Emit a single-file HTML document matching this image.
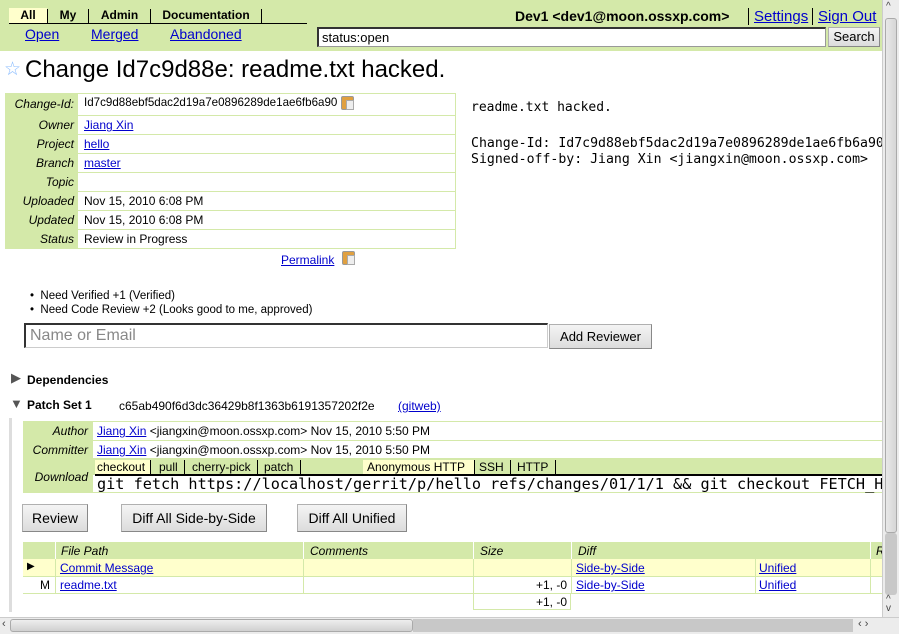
<!DOCTYPE html>
<html><head><meta charset="utf-8"><style>
*{margin:0;padding:0;box-sizing:border-box}
body{width:899px;height:634px;overflow:hidden;background:#fff;font-family:"Liberation Sans",sans-serif;font-size:12px;color:#000;position:relative}
.a{position:absolute;white-space:nowrap}
a,.l{color:#00c;text-decoration:underline}
.g{background:#d4e9a9}
.y{background:#ffffcc}
.m{font-family:"DejaVu Sans Mono","Liberation Mono",monospace}
.btn{position:absolute;background:linear-gradient(#f4f4f4,#dcdcdc);border:1px solid #b0b0b0;border-right-color:#888;border-bottom-color:#888;font-size:14px;text-align:center;line-height:26px}
.lab{position:absolute;font-style:italic;text-align:right}
.hl{position:absolute;height:1px;background:#d4e9a9}
.copy{position:absolute;width:13px;height:14px;background:#e0a040;border:1px solid #999;border-radius:2px}
.copy:after{content:"";position:absolute;left:4px;top:3px;width:6px;height:8px;background:#eee;border:1px solid #aaa}
</style></head><body>
<div class="a g" style="left:0;top:0;width:882px;height:51px"></div>
<div class="a y" style="left:9px;top:8px;width:38px;height:15px"></div>
<div class="a" style="left:9px;top:8px;font-weight:bold;font-size:12px;line-height:15px">
<span style="display:inline-block;width:38px;text-align:center">All</span><span style="display:inline-block;width:1px;height:14px;background:#000;vertical-align:middle"></span><span style="display:inline-block;width:40px;text-align:center">My</span><span style="display:inline-block;width:1px;height:14px;background:#000;vertical-align:middle"></span><span style="display:inline-block;width:61px;text-align:center">Admin</span><span style="display:inline-block;width:1px;height:14px;background:#000;vertical-align:middle"></span><span style="display:inline-block;width:110px;text-align:center">Documentation</span><span style="display:inline-block;width:1px;height:14px;background:#000;vertical-align:middle"></span></div>
<div class="a" style="left:9px;top:23px;width:298px;height:1px;background:#000"></div>
<a class="a" style="left:25px;top:26px;font-size:14px">Open</a>
<a class="a" style="left:91px;top:26px;font-size:14px">Merged</a>
<a class="a" style="left:170px;top:26px;font-size:14px">Abandoned</a>
<div class="a" style="left:317px;top:27px;width:509px;height:20px;background:#fff;border:1px solid #999;border-top:2px solid #333;border-left:2px solid #333;font-size:13px;padding:1px 3px;line-height:15px">status:open</div>
<div class="btn" style="left:828px;top:27px;width:52px;height:20px;font-size:13px;line-height:18px">Search</div>
<div class="a" style="left:515px;top:8px;font-size:14px;font-weight:bold">Dev1 &lt;dev1@moon.ossxp.com&gt;</div>
<div class="a" style="left:748px;top:8px;width:1px;height:17px;background:#000"></div>
<a class="a" style="left:754px;top:8px;font-size:15px">Settings</a>
<div class="a" style="left:812px;top:8px;width:1px;height:17px;background:#000"></div>
<a class="a" style="left:818px;top:8px;font-size:15px">Sign Out</a>
<div class="a" style="left:4px;top:58px;font-size:19px;color:#8bf">☆</div>
<div class="a" style="left:25px;top:56px;font-size:24px">Change Id7c9d88e: readme.txt hacked.</div>
<div class="a g" style="left:5px;top:93px;width:73px;height:156px"></div>
<div class="a" style="left:5px;top:93px;width:451px;height:156px;border:1px solid #d4e9a9"></div>
<div class="hl" style="left:78px;top:115px;width:378px"></div>
<div class="hl" style="left:78px;top:134px;width:378px"></div>
<div class="hl" style="left:78px;top:153px;width:378px"></div>
<div class="hl" style="left:78px;top:172px;width:378px"></div>
<div class="hl" style="left:78px;top:191px;width:378px"></div>
<div class="hl" style="left:78px;top:210px;width:378px"></div>
<div class="hl" style="left:78px;top:229px;width:378px"></div>
<div class="lab" style="left:5px;top:97px;width:69px">Change-Id:</div>
<div class="lab" style="left:5px;top:118px;width:69px">Owner</div>
<div class="lab" style="left:5px;top:137px;width:69px">Project</div>
<div class="lab" style="left:5px;top:156px;width:69px">Branch</div>
<div class="lab" style="left:5px;top:175px;width:69px">Topic</div>
<div class="lab" style="left:5px;top:194px;width:69px">Uploaded</div>
<div class="lab" style="left:5px;top:213px;width:69px">Updated</div>
<div class="lab" style="left:5px;top:232px;width:69px">Status</div>
<div class="a" style="left:84px;top:96px;font-size:11.6px">Id7c9d88ebf5dac2d19a7e0896289de1ae6fb6a90</div>
<div class="copy" style="left:341px;top:96px"></div>
<a class="a" style="left:84px;top:118px">Jiang Xin</a>
<a class="a" style="left:84px;top:137px">hello</a>
<a class="a" style="left:84px;top:156px">master</a>
<div class="a" style="left:84px;top:194px">Nov 15, 2010 6:08 PM</div>
<div class="a" style="left:84px;top:213px">Nov 15, 2010 6:08 PM</div>
<div class="a" style="left:84px;top:232px">Review in Progress</div>
<div class="a m" style="left:471px;top:100px;font-size:13px;line-height:16px">readme.txt hacked.</div>
<div class="a m" style="left:471px;top:136px;width:411px;overflow:hidden;font-size:13.2px;line-height:16px">Change-Id: Id7c9d88ebf5dac2d19a7e0896289de1ae6fb6a90<br>Signed-off-by: Jiang Xin &lt;jiangxin@moon.ossxp.com&gt;</div>
<a class="a" style="left:281px;top:253px">Permalink</a>
<div class="copy" style="left:342px;top:251px"></div>
<div class="a" style="left:30px;top:289px;line-height:14px;font-size:11.5px">• &nbsp;Need Verified +1 (Verified)<br>• &nbsp;Need Code Review +2 (Looks good to me, approved)</div>
<div class="a" style="left:24px;top:323px;width:524px;height:25px;border:1px solid #ccc;border-top:2px solid #333;border-left:2px solid #333;font-size:16px;color:#888;padding:1px 4px;line-height:20px">Name or Email</div>
<div class="btn" style="left:549px;top:324px;width:103px;height:25px;font-size:13px;line-height:23px">Add Reviewer</div>
<div class="a" style="left:11px;top:370px;font-size:13px;color:#555">▶</div>
<div class="a" style="left:27px;top:373px;font-weight:bold">Dependencies</div>
<div class="a" style="left:10px;top:396px;font-size:13px;color:#555">▼</div>
<div class="a" style="left:27px;top:398px;font-weight:bold">Patch Set 1</div>
<div class="a" style="left:119px;top:399px">c65ab490f6d3dc36429b8f1363b6191357202f2e</div>
<a class="a" style="left:398px;top:399px">(gitweb)</a>
<div class="a" style="left:9px;top:418px;width:3px;height:194px;background:#ddd"></div>
<div class="a g" style="left:23px;top:421px;width:860px;height:72px"></div>
<div class="a" style="left:93px;top:422px;width:790px;height:18px;background:#fff"></div>
<div class="a" style="left:93px;top:441px;width:790px;height:17px;background:#fff"></div>
<div class="a" style="left:93px;top:475px;width:790px;height:17px;background:#fff"></div>
<div class="lab" style="left:23px;top:424px;width:65px">Author</div>
<div class="lab" style="left:23px;top:443px;width:65px">Committer</div>
<div class="lab" style="left:23px;top:470px;width:65px">Download</div>
<div class="a" style="left:97px;top:424px"><span class="l">Jiang Xin</span> &lt;jiangxin@moon.ossxp.com&gt; Nov 15, 2010 5:50 PM</div>
<div class="a" style="left:97px;top:443px"><span class="l">Jiang Xin</span> &lt;jiangxin@moon.ossxp.com&gt; Nov 15, 2010 5:50 PM</div>
<div class="a y" style="left:95px;top:460px;width:55px;height:14px"></div>
<div class="a y" style="left:363px;top:460px;width:111px;height:14px"></div>
<div class="a" style="left:97px;top:460px;line-height:14px">checkout</div>
<div class="a" style="left:150px;top:460px;width:1px;height:14px;background:#000"></div>
<div class="a" style="left:159px;top:460px;line-height:14px">pull</div>
<div class="a" style="left:184px;top:460px;width:1px;height:14px;background:#000"></div>
<div class="a" style="left:192px;top:460px;line-height:14px">cherry-pick</div>
<div class="a" style="left:257px;top:460px;width:1px;height:14px;background:#000"></div>
<div class="a" style="left:264px;top:460px;line-height:14px">patch</div>
<div class="a" style="left:300px;top:460px;width:1px;height:14px;background:#000"></div>
<div class="a" style="left:367px;top:460px;line-height:14px">Anonymous HTTP</div>
<div class="a" style="left:474px;top:460px;width:1px;height:14px;background:#000"></div>
<div class="a" style="left:479px;top:460px;line-height:14px">SSH</div>
<div class="a" style="left:510px;top:460px;width:1px;height:14px;background:#000"></div>
<div class="a" style="left:517px;top:460px;line-height:14px">HTTP</div>
<div class="a" style="left:555px;top:460px;width:1px;height:14px;background:#000"></div>
<div class="a" style="left:95px;top:474px;width:788px;height:2px;background:#000"></div>
<div class="a m" style="left:97px;top:475px;width:786px;overflow:hidden;font-size:15.2px;line-height:18px">git fetch https://localhost/gerrit/p/hello refs/changes/01/1/1 &amp;&amp; git checkout FETCH_HEAD</div>
<div class="btn" style="left:22px;top:504px;width:66px;height:28px">Review</div>
<div class="btn" style="left:121px;top:504px;width:146px;height:28px">Diff All Side-by-Side</div>
<div class="btn" style="left:297px;top:504px;width:110px;height:28px">Diff All Unified</div>
<div class="a g" style="left:23px;top:542px;width:860px;height:17px"></div>
<div class="a y" style="left:23px;top:559px;width:860px;height:17px"></div>
<div class="hl" style="left:23px;top:576px;width:860px"></div>
<div class="hl" style="left:23px;top:593px;width:860px"></div>
<div class="a" style="left:473px;top:593px;width:98px;height:17px;border:1px solid #d4e9a9;border-top:0"></div>
<div class="a" style="left:55px;top:542px;width:1px;height:17px;background:#fff"></div>
<div class="a" style="left:303px;top:542px;width:1px;height:17px;background:#fff"></div>
<div class="a" style="left:473px;top:542px;width:1px;height:17px;background:#fff"></div>
<div class="a" style="left:571px;top:542px;width:1px;height:17px;background:#fff"></div>
<div class="a" style="left:870px;top:542px;width:1px;height:17px;background:#fff"></div>
<div class="a" style="left:55px;top:559px;width:1px;height:34px;background:#d4e9a9"></div>
<div class="a" style="left:303px;top:559px;width:1px;height:34px;background:#d4e9a9"></div>
<div class="a" style="left:473px;top:559px;width:1px;height:34px;background:#d4e9a9"></div>
<div class="a" style="left:571px;top:559px;width:1px;height:34px;background:#d4e9a9"></div>
<div class="a" style="left:755px;top:559px;width:1px;height:34px;background:#d4e9a9"></div>
<div class="a" style="left:870px;top:559px;width:1px;height:34px;background:#d4e9a9"></div>
<div class="lab" style="left:61px;top:544px;text-align:left">File Path</div>
<div class="lab" style="left:310px;top:544px;text-align:left">Comments</div>
<div class="lab" style="left:480px;top:544px;text-align:left">Size</div>
<div class="lab" style="left:578px;top:544px;text-align:left">Diff</div>
<div class="lab" style="left:876px;top:544px;text-align:left">R</div>
<div class="a" style="left:27px;top:561px;font-size:10px">▶</div>
<a class="a" style="left:60px;top:561px">Commit Message</a>
<a class="a" style="left:576px;top:561px">Side-by-Side</a>
<a class="a" style="left:759px;top:561px">Unified</a>
<div class="a" style="left:40px;top:578px">M</div>
<a class="a" style="left:60px;top:578px">readme.txt</a>
<div class="a" style="left:473px;top:578px;width:94px;text-align:right">+1, -0</div>
<a class="a" style="left:576px;top:578px">Side-by-Side</a>
<a class="a" style="left:759px;top:578px">Unified</a>
<div class="a" style="left:473px;top:595px;width:94px;text-align:right">+1, -0</div>
<div class="a" style="left:882px;top:0;width:17px;height:617px;background:#ececec;border-left:1px solid #ccc"></div>
<div class="a" style="left:885px;top:18px;width:12px;height:515px;background:linear-gradient(90deg,#e8e8e8,#d6d6d6);border:1px solid #aaa;border-radius:3px"></div>
<div class="a" style="left:885px;top:533px;width:12px;height:62px;background:#c8c8c8;border-radius:3px"></div>
<div class="a" style="left:886px;top:1px;font-size:10px;color:#444">^</div>
<div class="a" style="left:886px;top:595px;font-size:10px;color:#444;line-height:9px">^<br>v</div>
<div class="a" style="left:0;top:617px;width:899px;height:17px;background:#ececec;border-top:1px solid #ccc"></div>
<div class="a" style="left:10px;top:619px;width:403px;height:13px;background:linear-gradient(#eee,#d0d0d0);border:1px solid #aaa;border-radius:3px"></div>
<div class="a" style="left:413px;top:619px;width:440px;height:13px;background:#c8c8c8"></div>
<div class="a" style="left:2px;top:618px;font-size:11px;color:#444">‹</div>
<div class="a" style="left:858px;top:618px;font-size:11px;color:#444">‹ ›</div>
</body></html>
